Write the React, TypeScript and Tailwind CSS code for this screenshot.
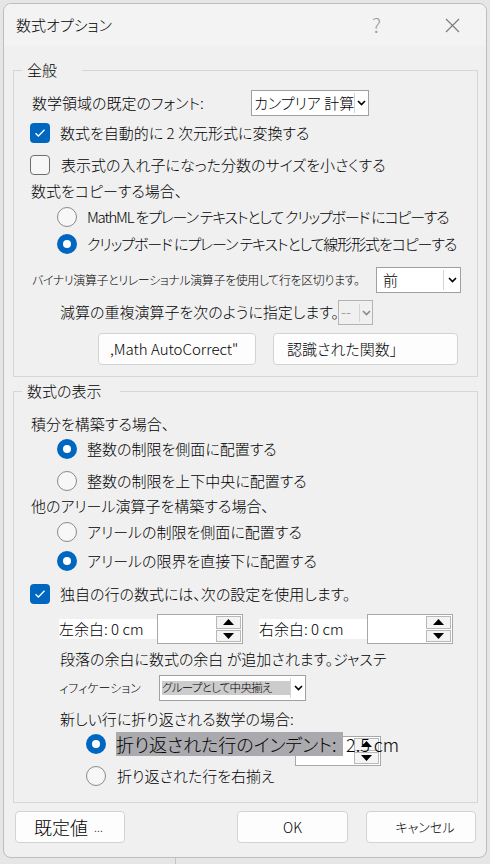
import React from "react";

type Children = { children?: React.ReactNode };

const Checkbox = ({ checked }: { checked?: boolean }) =>
  checked ? (
    <span className="flex h-[20px] w-[20px] shrink-0 items-center justify-center rounded-[4px] bg-[#0067c0]">
      <svg width="12" height="10" viewBox="0 0 12 10">
        <polyline points="1.5,5.2 4.4,8 10.5,1.8" fill="none" stroke="white" strokeWidth="1.3" />
      </svg>
    </span>
  ) : (
    <span className="h-[20px] w-[20px] shrink-0 rounded-[4px] border border-[#6e6e6e] bg-[#f7f7f7]" />
  );

const Radio = ({ checked }: { checked?: boolean }) =>
  checked ? (
    <span className="flex h-[20px] w-[20px] shrink-0 items-center justify-center rounded-full bg-[#0067c0]">
      <span className="h-[8px] w-[8px] rounded-full bg-white" />
    </span>
  ) : (
    <span className="h-[20px] w-[20px] shrink-0 rounded-full border border-[#8a8a8a] bg-[#f7f7f7]" />
  );

const Chevron = ({ color = "#000" }: { color?: string }) => (
  <svg width="9" height="6" viewBox="0 0 9 6">
    <polyline points="1,1 4.5,4.5 8,1" fill="none" stroke={color} strokeWidth="1.6" />
  </svg>
);

const Triangle = ({ up }: { up?: boolean }) => (
  <svg width="11" height="6" viewBox="0 0 11 6">
    <polygon points={up ? "5.5,0 11,6 0,6" : "0,0 11,0 5.5,6"} fill="#000" />
  </svg>
);

// spin box with a blank edit area and stacked arrow buttons
const Spin = ({ className = "" }: { className?: string }) => (
  <div className={`flex h-[30px] w-[86px] shrink-0 border border-[#a8a8a8] bg-white ${className}`}>
    <div className="flex-1" />
    <div className="flex w-[26px] flex-col gap-[1px] py-[1px] pr-[1px]">
      <div className="flex flex-1 items-center justify-center border border-[#b8b8b8] bg-[#f4f4f4]">
        <Triangle up />
      </div>
      <div className="flex flex-1 items-center justify-center border border-[#b8b8b8] bg-[#f4f4f4]">
        <Triangle />
      </div>
    </div>
  </div>
);

const Button = ({ className = "", children }: { className?: string } & Children) => (
  <div
    className={`flex h-[32px] shrink-0 items-center whitespace-nowrap rounded-[4px] border border-[#d3d3d3] bg-[#fdfdfd] ${className}`}
  >
    {children}
  </div>
);

const Group = ({ title, gap, className = "", children }: { title: string; gap: string } & Children & { className?: string }) => (
  <div className={`relative ml-[9px] w-[465px] border border-[#d6d6d6] ${className}`}>
    <div className={`absolute left-[8px] top-[-12px] flex h-[22px] items-center bg-[#f0f0f0] pl-[5px] text-[15px] ${gap}`}>
      {title}
    </div>
    {children}
  </div>
);

const Row = ({ className = "", children }: { className?: string } & Children) => (
  <div className={`flex h-[20px] items-center whitespace-nowrap ${className}`}>{children}</div>
);

export default function App() {
  return (
    <div className="h-[864px] w-[490px] overflow-hidden bg-[#e6e6e6] pl-[3px] pt-[3px] font-['Noto_Sans_CJK_JP','Noto_Sans',sans-serif] text-[15px] font-light text-black [font-feature-settings:'palt']">
      <div className="flex h-[855px] w-[484px] flex-col overflow-hidden rounded-[8px] border border-[#bdbdbd] bg-[#f0f0f0]">
        {/* title bar */}
        <div className="flex h-[42px] shrink-0 items-center bg-[#f3f3f3] pl-[12px]">
          <span className="text-[15px]">数式オプション</span>
          <span className="ml-auto mr-[64px] text-[20px] font-light text-[#9a9a9a]">?</span>
          <svg className="mr-[26px]" width="15" height="15" viewBox="0 0 15 15">
            <path d="M1 1 L14 14 M14 1 L1 14" stroke="#7d7d7d" strokeWidth="1.2" />
          </svg>
        </div>

        <Group title="全般" gap="w-[60px]" className="mt-[24px] pb-[11px]">
          <div className="mt-[19px] flex h-[26px] items-center pl-[18px]">
            <span className="w-[219px] whitespace-nowrap">数学領域の既定のフォント:</span>
            <div className="flex h-[26px] w-[118px] items-center border border-[#a0a0a0] bg-white">
              <span className="flex-1 whitespace-nowrap pl-[2px]">カンプリア 計算</span>
              <span className="h-[20px] w-px bg-[#d4d4d4]" />
              <span className="flex w-[14px] justify-center">
                <Chevron />
              </span>
            </div>
          </div>
          <Row className="mt-[7px] pl-[16px]">
            <Checkbox checked />
            <span className="ml-[10px]">数式を自動的に 2 次元形式に変換する</span>
          </Row>
          <Row className="mt-[12px] pl-[16px]">
            <Checkbox />
            <span className="ml-[11px]">表示式の入れ子になった分数のサイズを小さくする</span>
          </Row>
          <Row className="mt-[6px] pl-[17px]">数式をコピーする場合、</Row>
          <Row className="mt-[6px] pl-[43px]">
            <Radio />
            <span className="ml-[10px] tracking-[-1.2px]">MathML をプレーン テキストとして クリップボード にコピーする</span>
          </Row>
          <Row className="mt-[7px] pl-[43px]">
            <Radio checked />
            <span className="ml-[10px] tracking-[-1.1px]">クリップボード にプレーン テキストとして線形形式をコピーする</span>
          </Row>
          <div className="mt-[13px] flex h-[26px] items-center pl-[18px]">
            <span className="w-[344px] whitespace-nowrap text-[12px] tracking-[-0.4px]">
              バイナリ演算子とリレーショナル演算子を使用して行を区切ります。
            </span>
            <div className="flex h-[26px] w-[85px] items-center border border-[#a0a0a0] bg-white">
              <span className="flex-1 pl-[6px]">前</span>
              <span className="h-[20px] w-px bg-[#d4d4d4]" />
              <span className="flex w-[16px] justify-center">
                <Chevron />
              </span>
            </div>
          </div>
          <div className="mt-[7px] flex h-[25px] items-center pl-[46px]">
            <span className="w-[278px] whitespace-nowrap">減算の重複演算子を次のように指定します。</span>
            <div className="flex h-[25px] w-[35px] items-center border border-[#b4b4b4]">
              <span className="flex-1 pl-[2px] text-[#8a8a8a]">--</span>
              <span className="h-[18px] w-px bg-[#d4d4d4]" />
              <span className="flex w-[12px] justify-center">
                <Chevron color="#8a8a8a" />
              </span>
            </div>
          </div>
          <div className="mt-[8px] flex gap-[17px] pl-[84px]">
            <Button className="w-[158px] pl-[11px]">,Math AutoCorrect"</Button>
            <Button className="w-[185px] pl-[13px]">認識された関数」</Button>
          </div>
        </Group>

        <Group title="数式の表示" gap="w-[98px]" className="mt-[14px] pb-[16px]">
          <Row className="mt-[22px] pl-[17px]">積分を構築する場合、</Row>
          <Row className="mt-[5px] pl-[43px]">
            <Radio checked />
            <span className="ml-[10px]">整数の制限を側面に配置する</span>
          </Row>
          <Row className="mt-[12px] pl-[43px]">
            <Radio />
            <span className="ml-[10px]">整数の制限を上下中央に配置する</span>
          </Row>
          <Row className="mt-[5px] pl-[17px]">他のアリール演算子を構築する場合、</Row>
          <Row className="mt-[6px] pl-[43px]">
            <Radio />
            <span className="ml-[10px]">アリールの制限を側面に配置する</span>
          </Row>
          <Row className="mt-[9px] pl-[43px]">
            <Radio checked />
            <span className="ml-[10px]">アリールの限界を直接下に配置する</span>
          </Row>
          <Row className="mt-[13px] pl-[16px]">
            <Checkbox checked />
            <span className="ml-[10px]">独自の行の数式には、次の設定を使用します。</span>
          </Row>
          <div className="mt-[10px] flex h-[30px] items-center pl-[45px]">
            <span className="flex h-[20px] w-[98px] items-center whitespace-nowrap bg-white">左余白: 0 cm</span>
            <Spin />
            <span className="ml-[16px] flex h-[20px] w-[108px] items-center whitespace-nowrap bg-white">
              右余白: 0 cm
            </span>
            <Spin />
          </div>
          <Row className="mt-[5px] pl-[46px]">段落の余白に数式の余白 が追加されます。ジャステ</Row>
          <div className="mt-[6px] flex h-[26px] items-center pl-[45px]">
            <span className="w-[100px] whitespace-nowrap text-[12px]">ィフィケーション</span>
            <div className="flex h-[26px] w-[147px] items-center border border-[#a0a0a0] bg-white">
              <span className="ml-[2px] flex h-[14px] w-[128px] items-center whitespace-nowrap bg-[#cccccc] text-[11.5px] leading-none tracking-[-0.7px]">
                グループとして中央揃え
              </span>
              <span className="ml-auto h-[20px] w-px bg-[#d4d4d4]" />
              <span className="flex w-[14px] justify-center">
                <Chevron />
              </span>
            </div>
          </div>
          <Row className="mt-[8px] pl-[46px]">新しい行に折り返される数学の場合:</Row>
          <div className="relative mt-[5px] flex h-[20px] items-center whitespace-nowrap pl-[72px]">
            <Spin className="absolute left-[281px] top-[2px] h-[26px]" />
            <Radio checked />
            <span className="relative ml-[10px] flex h-[24px] w-[227px] items-center bg-[#a9a9ae] text-[18px] leading-none">
              折り返された行のインデント:
            </span>
            <span className="relative ml-[3px] text-[18px]">2.5 cm</span>
          </div>
          <Row className="mt-[12px] pl-[72px]">
            <Radio />
            <span className="ml-[11px]">折り返された行を右揃え</span>
          </Row>
        </Group>

        <div className="mt-[8px] flex pl-[11px] pr-[10px]">
          <Button className="w-[110px] pl-[18px]">
            <span className="text-[18px]">既定値</span>
            <span className="ml-[6px] text-[12px]">...</span>
          </Button>
          <Button className="ml-auto w-[111px] justify-center text-[14px]">OK</Button>
          <Button className="ml-[18px] w-[110px] justify-center pl-[8px] text-[13px]">キャンセル</Button>
        </div>
      </div>
      <div className="ml-[172px] h-[6px] w-px bg-[#c4c4c4]" />
    </div>
  );
}
